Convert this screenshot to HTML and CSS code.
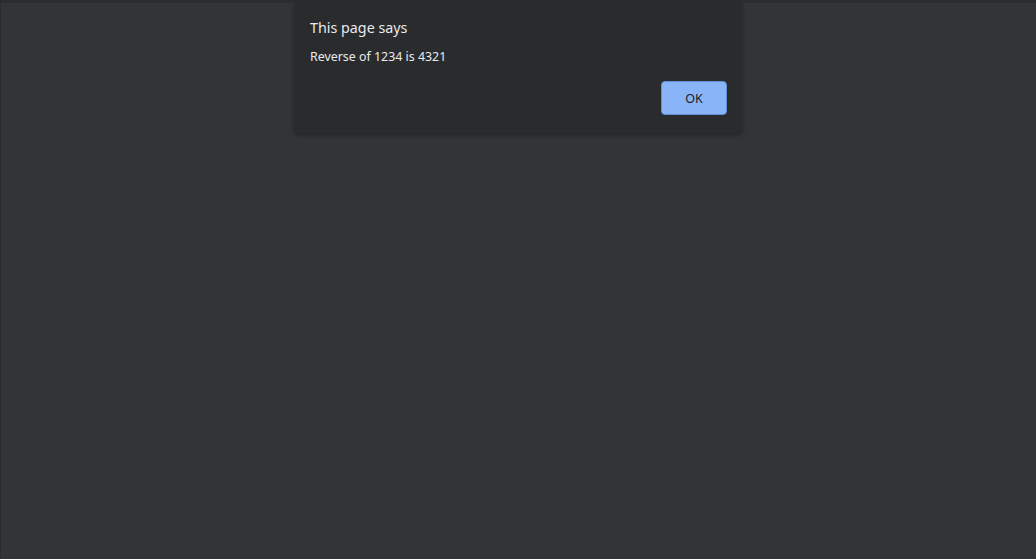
FILE: index.html
```html
<!DOCTYPE html>
<html>
<head>
<meta charset="utf-8">
<link rel="stylesheet" href="styles.css">
</head>
<body>
<div class="page">
  <div class="dialog">
    <div class="title">This page says</div>
    <div class="message">Reverse of 1234 is 4321</div>
    <div class="actions">
      <button class="ok">OK</button>
    </div>
  </div>
</div>
</body>
</html>
```
FILE: styles.css
```css
html, body {
  margin: 0;
  height: 100%;
  background: #323537;
  font-family: "Noto Sans", "Open Sans", sans-serif;
}
.page {
  height: 100%;
  box-sizing: border-box;
  border-top: 3px solid #2b2d2f;
  border-left: 1px solid #2a2c2e;
  display: flex;
  justify-content: center;
  position: relative;
}
.dialog {
  position: absolute;
  top: 0;
  left: 293px;
  width: 448px;
  height: 130px;
  box-sizing: border-box;
  background: #292b2d;
  border-radius: 0 0 4px 4px;
  box-shadow: 0 2px 5px rgba(0,0,0,0.3);
  padding: 15px 15px 0 16px;
  display: flex;
  flex-direction: column;
}
.title {
  color: #e8eaed;
  font-size: 14.3px;
  line-height: 20px;
}
.message {
  margin-top: 11px;
  color: #e8eaed;
  font-size: 12.4px;
  line-height: 16px;
}
.actions {
  display: flex;
  justify-content: flex-end;
  margin-top: 16px;
}
.ok {
  width: 66px;
  height: 34px;
  background: #8ab4f8;
  border: 1px solid #5f8fd8;
  border-radius: 4px;
  color: #202124;
  font-family: "Noto Sans", "Open Sans", sans-serif;
  font-size: 12.5px;
  padding: 0;
}
```
